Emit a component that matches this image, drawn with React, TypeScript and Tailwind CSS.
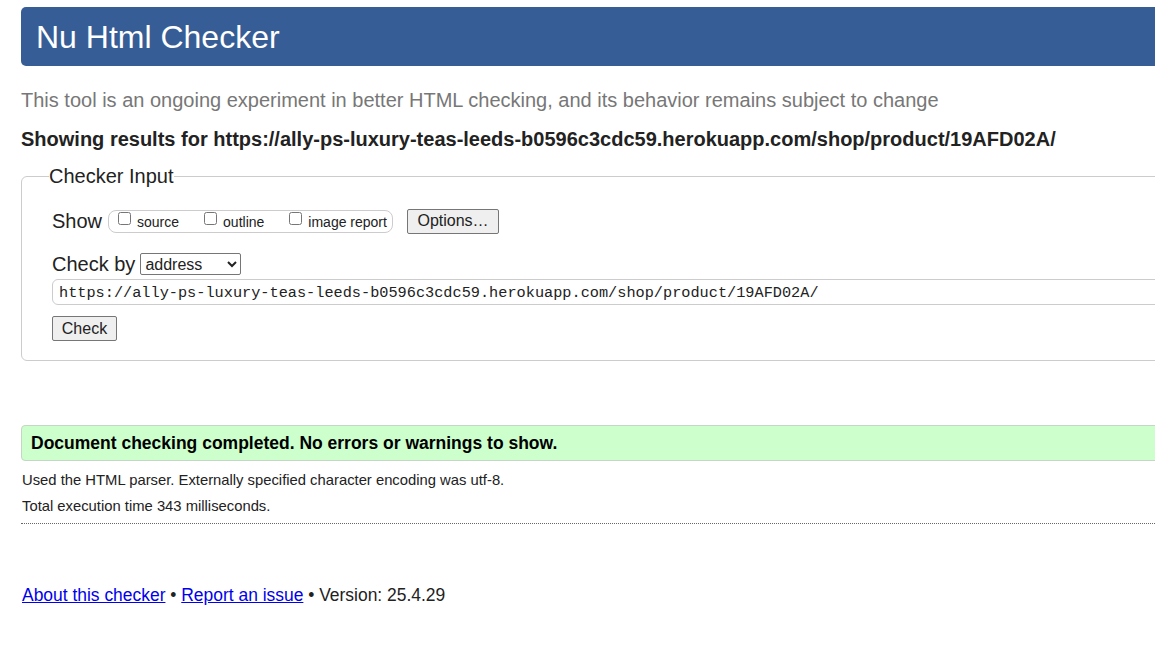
import React from "react";

export default function App() {
  const url =
    "https://ally-ps-luxury-teas-leeds-b0596c3cdc59.herokuapp.com/shop/product/19AFD02A/";
  return (
    <div
      className="w-[1155px] h-[672px] overflow-hidden bg-white text-[#222]"
      style={{ fontFamily: '"Liberation Sans", Arial, sans-serif' }}
    >
      <div className="ml-[21px] w-[1300px] pt-[7px]">
        <header className="h-[59px] bg-[#365d95] rounded-l-[5px] flex items-center pl-[15px]">
          <h1 className="text-[32px] leading-[36px] text-white font-normal">Nu Html Checker</h1>
        </header>

        <p className="mt-[22px] text-[20px] leading-[24px] text-[#777]">
          This tool is an ongoing experiment in better HTML checking, and its behavior remains subject to change
        </p>
        <p className="mt-[15px] text-[20px] leading-[24px] font-bold text-[#222]">
          Showing results for {url}
        </p>

        <fieldset className="mt-[13px] border border-[#ccc] rounded-l-[6px] pl-[30px] pb-[19px]">
          <legend className="ml-[-3px] text-[20px] leading-[24px] px-0">Checker Input</legend>

          <div className="mt-[20px] h-[26px] flex items-center">
            <span className="text-[20px] leading-[24px]">Show</span>
            <div className="ml-[6px] h-[23px] w-[285px] border border-[#ccc] rounded-[8px] flex items-center pl-[9px] text-[14px]">
              <label className="flex items-center">
                <input type="checkbox" className="w-[13px] h-[13px] m-0 mt-[-5px]" />
                <span className="ml-[6px] mt-[2px]">source</span>
              </label>
              <label className="flex items-center ml-[25px]">
                <input type="checkbox" className="w-[13px] h-[13px] m-0 mt-[-5px]" />
                <span className="ml-[6px] mt-[2px]">outline</span>
              </label>
              <label className="flex items-center ml-[25px]">
                <input type="checkbox" className="w-[13px] h-[13px] m-0 mt-[-5px]" />
                <span className="ml-[6px] mt-[2px]">image report</span>
              </label>
            </div>
            <button className="ml-[14px] w-[92px] h-[25px] bg-[#efefef] border border-[#767676] rounded-[2px] text-[16px] leading-[20px]">
              Options…
            </button>
          </div>

          <div className="mt-[17px] h-[26px] flex items-center">
            <span className="text-[20px] leading-[24px]">Check by</span>
            <select className="ml-[5px] w-[101px] h-[22px] border border-[#767676] rounded-[2px] text-[16px] bg-white">
              <option>address</option>
            </select>
          </div>

          <div
            className="mt-[2px] h-[26px] border border-[#ccc] rounded-l-[6px] flex items-center pl-[6px] pt-[2px] text-[15.25px]"
            style={{ fontFamily: '"Liberation Mono", "DejaVu Sans Mono", monospace' }}
          >
            {url}
          </div>

          <button className="mt-[11px] w-[65px] h-[25px] bg-[#efefef] border border-[#767676] rounded-[2px] text-[16px] leading-[20px] block">
            Check
          </button>
        </fieldset>

        <div className="mt-[64px] h-[36px] bg-[#ccffcc] border border-[#c4d6c4] rounded-l-[4px] flex items-center pl-[9px]">
          <span className="text-[17.5px] font-bold text-black">
            Document checking completed. No errors or warnings to show.
          </span>
        </div>

        <p className="mt-[10px] text-[14.8px] leading-[18px] ml-[1px]">
          Used the HTML parser. Externally specified character encoding was utf-8.
        </p>
        <p className="mt-[8px] text-[14.8px] leading-[18px] ml-[1px]">Total execution time 343 milliseconds.</p>
        <div className="mt-[8px] border-t border-dotted border-[#666]" />

        <p className="mt-[60px] text-[17.45px] leading-[22px] ml-[1px]">
          <a href="#" className="text-[#0000ee] underline">About this checker</a>
          {" • "}
          <a href="#" className="text-[#0000ee] underline">Report an issue</a>
          {" • Version: 25.4.29"}
        </p>
      </div>
    </div>
  );
}
